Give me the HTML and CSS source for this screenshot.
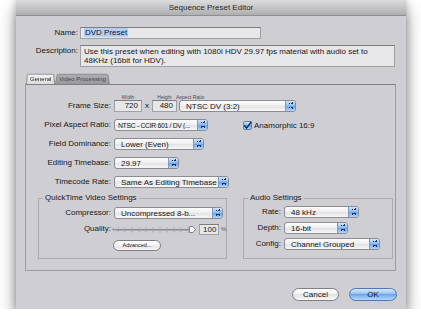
FILE: index.html
```html
<!DOCTYPE html>
<html lang="en">
<head>
    <meta charset="UTF-8">
    <title>Sequence Preset Editor</title>
    <link rel="stylesheet" href="styles.css">
</head>
<body>
    <!--dialog window-->
    <div class="window">
        <div class="titlebar">Sequence Preset Editor</div>
        <div class="content">
            <div class="row">
                <span class="lbl">Name:</span>
                <div class="field nameField"><span class="sel">DVD Preset</span></div>
            </div>
            <div class="row descRow">
                <span class="lbl">Description:</span>
                <div class="field descField">Use this preset when editing with 1080i HDV 29.97 fps material with audio set to<br>48KHz (16bit for HDV).</div>
            </div>

            <div class="tabs">
                <span class="tab on">General</span>
                <span class="tab">Video Processing</span>
            </div>
            <div class="tabBox">
                <div class="frow frameRow">
                    <span class="lbl">Frame Size:</span>
                    <div class="col">
                        <span class="hdr center">Width</span>
                        <div class="field num w720">720</div>
                    </div>
                    <span class="times">x</span>
                    <div class="col">
                        <span class="hdr center">Height</span>
                        <div class="field num w480">480</div>
                    </div>
                    <div class="col aspect">
                        <span class="hdr">Aspect Ratio</span>
                        <div class="popup" style="width:117px"><span>NTSC DV (3:2)</span><i class="cap"></i></div>
                    </div>
                </div>
                <div class="frow">
                    <span class="lbl">Pixel Aspect Ratio:</span>
                    <div class="popup tight" style="width:94px"><span>NTSC - CCIR 601 / DV (...</span><i class="cap"></i></div>
                    <span class="check"><svg width="9" height="9" viewBox="0 0 9 9"><path d="M1.5 4.5 L3.6 7.2 L8.4 0.6" fill="none" stroke="#10284f" stroke-width="1.4"/></svg></span>
                    <span class="checkLbl">Anamorphic 16:9</span>
                </div>
                <div class="frow">
                    <span class="lbl">Field Dominance:</span>
                    <div class="popup" style="width:90px"><span>Lower (Even)</span><i class="cap"></i></div>
                </div>
                <div class="frow">
                    <span class="lbl">Editing Timebase:</span>
                    <div class="popup" style="width:65px"><span>29.97</span><i class="cap"></i></div>
                </div>
                <div class="frow">
                    <span class="lbl">Timecode Rate:</span>
                    <div class="popup" style="width:115px"><span>Same As Editing Timebase</span><i class="cap"></i></div>
                </div>

                <div class="groups">
                    <fieldset class="qt">
                        <legend>QuickTime Video Settings</legend>
                        <div class="grow">
                            <span class="lbl">Compressor:</span>
                            <div class="popup" style="width:109px"><span>Uncompressed 8-b...</span><i class="cap"></i></div>
                        </div>
                        <div class="grow">
                            <span class="lbl">Quality:</span>
                            <svg class="slider" width="84" height="11" viewBox="0 0 84 11">
                                <circle cx="1.5" cy="5.5" r="1" fill="#777"/>
                                <rect x="3" y="5" width="76" height="1.5" fill="#8c8c90"/>
                                <g stroke="#9a9a9e" stroke-width="0.7">
                                    <path d="M6 3v1.5M13 3v1.5M20 3v1.5M27 3v1.5M34 3v1.5M41 3v1.5M48 3v1.5M55 3v1.5M62 3v1.5M69 3v1.5M76 3v1.5"/>
                                    <path d="M6 7v1.5M13 7v1.5M20 7v1.5M27 7v1.5M34 7v1.5M41 7v1.5M48 7v1.5M55 7v1.5M62 7v1.5M69 7v1.5M76 7v1.5"/>
                                </g>
                                <path d="M77.5 2.5h3.5l2.5 3-2.5 3h-3.5z" fill="#f4f4f4" stroke="#6d6d72" stroke-width="0.8"/>
                            </svg>
                            <div class="field num qfield">100</div>
                            <span class="pct">%</span>
                        </div>
                        <div class="grow">
                            <span class="lbl"></span>
                            <span class="btn small">Advanced...</span>
                        </div>
                    </fieldset>
                    <fieldset class="audio">
                        <legend>Audio Settings</legend>
                        <div class="grow">
                            <span class="lbl">Rate:</span>
                            <div class="popup" style="width:75px"><span>48 kHz</span><i class="cap"></i></div>
                        </div>
                        <div class="grow">
                            <span class="lbl">Depth:</span>
                            <div class="popup" style="width:64px"><span>16-bit</span><i class="cap"></i></div>
                        </div>
                        <div class="grow">
                            <span class="lbl">Config:</span>
                            <div class="popup" style="width:96px"><span>Channel Grouped</span><i class="cap"></i></div>
                        </div>
                    </fieldset>
                </div>
            </div>

            <div class="buttons">
                <span class="btn cancel">Cancel</span>
                <span class="btn ok">OK</span>
            </div>
        </div>
    </div>
</body>
</html>
```

FILE: styles.css
```css
*{
    padding: 0;
    margin: 0;
    box-sizing: border-box;
}
body{
    background: #fff;
    font-family: "Liberation Sans", Arial, sans-serif;
    font-size: 8px;
    color: #161618;
}
.window{
    width: 390px;
    height: 309px;
    margin-left: 16px;
    background: #cfcfd3;
    box-shadow: 0 10px 16px rgba(0,0,0,0.42), 0 0 8px rgba(0,0,0,0.25);
}
.titlebar{
    height: 16px;
    line-height: 15px;
    text-align: center;
    color: #2a2a2c;
    background: linear-gradient(#dcdcde, #afafb2);
    border-bottom: 1px solid #8f8f93;
}
.content{
    padding: 11px 10px 0 9px;
}
.row{
    display: flex;
    align-items: center;
}
.lbl{
    flex: none;
    width: 53px;
    margin-right: 2px;
    text-align: right;
    line-height: 12px;
    white-space: nowrap;
}
.field{
    flex: none;
    background: #e7e7e9;
    border: 1px solid #a1a1a5;
    border-top-color: #7d7d81;
    padding: 0 3px;
    line-height: 10px;
    white-space: nowrap;
}
.nameField{
    width: 181px;
    height: 12px;
}
.sel{
    background: #b4cff2;
    padding: 0 1px;
}
.descRow{
    margin-top: 6px;
    align-items: flex-start;
}
.descRow .lbl{
    line-height: 10px;
    padding-top: 1px;
}
.descField{
    width: 315px;
    height: 22px;
    line-height: 9px;
    padding-top: 1px;
}

/* tabs */
.tabs{
    display: flex;
    height: 11px;
    margin-top: 6px;
    padding-left: 1px;
}
.tab{
    position: relative;
    z-index: 0;
    padding: 0 4px;
    font-size: 6px;
    line-height: 12px;
    color: #47474b;
}
.tab::before{
    content: "";
    position: absolute;
    top: 0;
    left: 0;
    right: 0;
    bottom: 0;
    z-index: -1;
    border: 1px solid #8a8a8e;
    border-bottom: none;
    border-radius: 2px 2px 0 0;
    background: linear-gradient(#aeaeb2, #98989c);
    transform: perspective(14px) rotateX(5deg);
    transform-origin: bottom;
}
.tab.on{
    color: #222;
    z-index: 1;
}
.tab.on::before{
    background: linear-gradient(#f4f4f5, #dcdcde);
}
.tabBox{
    height: 187px;
    border: 1px solid #9c9ca0;
    border-top-color: #818185;
    padding-top: 9px;
}
.frow{
    display: flex;
    align-items: center;
    margin-top: 7px;
}
.frow .lbl{
    width: 85px;
    margin-right: 3px;
}
.frameRow{
    margin-top: 0;
    align-items: flex-end;
}
.col{
    display: flex;
    flex-direction: column;
}
.hdr{
    font-size: 5px;
    line-height: 6px;
    color: #4a4a4e;
    white-space: nowrap;
}
.center{
    text-align: center;
}
.num{
    height: 12px;
    text-align: right;
}
.w720{
    width: 28px;
}
.w480{
    width: 25px;
}
.times{
    width: 10px;
    text-align: center;
    line-height: 12px;
}
.aspect{
    margin-left: 2px;
}
.aspect .hdr{
    margin-left: -3px;
}

/* popup buttons */
.popup{
    flex: none;
    display: flex;
    align-items: center;
    height: 12px;
    padding-left: 6px;
    border: 1px solid #8d8d91;
    border-radius: 3px;
    background: linear-gradient(#fdfdfd, #eeeeee 50%, #e2e2e2 50%, #f7f7f7);
    overflow: hidden;
    white-space: nowrap;
}
.popup span{
    flex: 1;
    overflow: hidden;
}
.popup.tight{
    padding-left: 3px;
}
.popup.tight span{
    font-size: 6.8px;
    letter-spacing: -0.3px;
}
.popup .cap{
    flex: none;
    width: 10px;
    height: 100%;
    border-left: 1px solid #7c9ccc;
    background:
        linear-gradient(to bottom left, transparent 50%, #17325f 50%) 3px 1px / 2px 2px no-repeat,
        linear-gradient(to bottom right, transparent 50%, #17325f 50%) 5px 1px / 2px 2px no-repeat,
        linear-gradient(to top left, transparent 50%, #17325f 50%) 3px 6px / 2px 2px no-repeat,
        linear-gradient(to top right, transparent 50%, #17325f 50%) 5px 6px / 2px 2px no-repeat,
        linear-gradient(#d3e4f9, #8ab8f0 50%, #6aa2ea 50%, #b3d4f8);
}
.check{
    flex: none;
    width: 9px;
    height: 9px;
    margin-left: 35px;
    border: 1px solid #5b7fb5;
    border-radius: 2px;
    background: linear-gradient(#d6e6fa, #86b4ee 50%, #6aa2ea 50%, #b6d6f9);
    line-height: 0;
}
.check svg{
    margin: -1px 0 0 -1px;
}
.checkLbl{
    margin-left: 2px;
}

/* group boxes */
.groups{
    display: flex;
    margin: 5px 0 0 12px;
}
fieldset{
    min-width: 0;
    border: 1px solid #acacb0;
    padding: 4px 0 7px;
}
legend{
    margin-left: 4px;
    padding: 0 2px;
    line-height: 10px;
}
.qt{
    width: 189px;
}
.audio{
    width: 150px;
    margin-left: 16px;
    padding-top: 3px;
}
.grow{
    display: flex;
    align-items: center;
    height: 12px;
    margin-top: 4px;
}
legend + .grow{
    margin-top: 0;
}
.qt .lbl{
    width: 72px;
    margin-right: 3px;
}
.audio .lbl{
    width: 37px;
    margin-right: 3px;
}
.slider{
    margin-left: -2px;
    flex: none;
}
.qfield{
    width: 20px;
    height: 11px;
    margin-left: 3px;
    padding-right: 2px;
    line-height: 9px;
}
.pct{
    margin-left: 2px;
    font-size: 6px;
    color: #555;
}

/* push buttons */
.btn{
    display: flex;
    align-items: center;
    justify-content: center;
    border: 1px solid #808084;
    border-radius: 7px;
    background: linear-gradient(#ffffff, #f0f0f0 50%, #e2e2e2 50%, #f8f8f8);
    white-space: nowrap;
}
.small{
    width: 48px;
    height: 11px;
    font-size: 5.5px;
    margin-left: -1px;
}
.buttons{
    display: flex;
    justify-content: flex-end;
    margin: 17px -1px 0 0;
}
.cancel, .ok{
    height: 13px;
    width: 47px;
}
.ok{
    width: 48px;
    margin-left: 10px;
    border-color: #4f78b4;
    background: linear-gradient(#d7e8fb, #8fbdf2 50%, #6ea6ec 50%, #b8dafb);
}
```
